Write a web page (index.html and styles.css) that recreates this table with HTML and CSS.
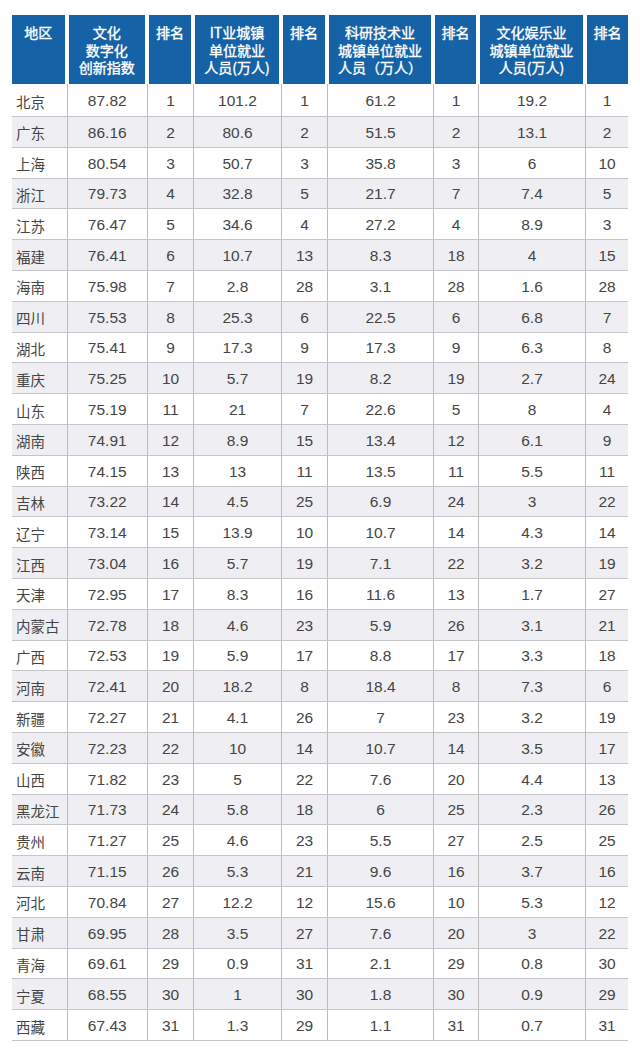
FILE: index.html
```html
<!DOCTYPE html>
<html lang="zh">
<head>
<meta charset="utf-8">
<title>文化数字化创新指数</title>
<link rel="stylesheet" href="styles.css">
</head>
<body>
<div class="table">
  <div class="head">
    <div class="hc">地区</div>
    <div class="hc"><span class="ln">文化</span><span class="ln">数字化</span><span class="ln">创新指数</span></div>
    <div class="hc">排名</div>
    <div class="hc"><span class="ln">IT业城镇</span><span class="ln">单位就业</span><span class="ln">人员(万人)</span></div>
    <div class="hc">排名</div>
    <div class="hc"><span class="ln">科研技术业</span><span class="ln">城镇单位就业</span><span class="ln">人员（万人）</span></div>
    <div class="hc">排名</div>
    <div class="hc"><span class="ln">文化娱乐业</span><span class="ln">城镇单位就业</span><span class="ln">人员(万人)</span></div>
    <div class="hc">排名</div>
  </div>
  <div class="row first"><div class="c name">北京</div><div class="c">87.82</div><div class="c">1</div><div class="c">101.2</div><div class="c">1</div><div class="c">61.2</div><div class="c">1</div><div class="c">19.2</div><div class="c">1</div></div>
  <div class="row alt"><div class="c name">广东</div><div class="c">86.16</div><div class="c">2</div><div class="c">80.6</div><div class="c">2</div><div class="c">51.5</div><div class="c">2</div><div class="c">13.1</div><div class="c">2</div></div>
  <div class="row"><div class="c name">上海</div><div class="c">80.54</div><div class="c">3</div><div class="c">50.7</div><div class="c">3</div><div class="c">35.8</div><div class="c">3</div><div class="c">6</div><div class="c">10</div></div>
  <div class="row alt"><div class="c name">浙江</div><div class="c">79.73</div><div class="c">4</div><div class="c">32.8</div><div class="c">5</div><div class="c">21.7</div><div class="c">7</div><div class="c">7.4</div><div class="c">5</div></div>
  <div class="row"><div class="c name">江苏</div><div class="c">76.47</div><div class="c">5</div><div class="c">34.6</div><div class="c">4</div><div class="c">27.2</div><div class="c">4</div><div class="c">8.9</div><div class="c">3</div></div>
  <div class="row alt"><div class="c name">福建</div><div class="c">76.41</div><div class="c">6</div><div class="c">10.7</div><div class="c">13</div><div class="c">8.3</div><div class="c">18</div><div class="c">4</div><div class="c">15</div></div>
  <div class="row"><div class="c name">海南</div><div class="c">75.98</div><div class="c">7</div><div class="c">2.8</div><div class="c">28</div><div class="c">3.1</div><div class="c">28</div><div class="c">1.6</div><div class="c">28</div></div>
  <div class="row alt"><div class="c name">四川</div><div class="c">75.53</div><div class="c">8</div><div class="c">25.3</div><div class="c">6</div><div class="c">22.5</div><div class="c">6</div><div class="c">6.8</div><div class="c">7</div></div>
  <div class="row"><div class="c name">湖北</div><div class="c">75.41</div><div class="c">9</div><div class="c">17.3</div><div class="c">9</div><div class="c">17.3</div><div class="c">9</div><div class="c">6.3</div><div class="c">8</div></div>
  <div class="row alt"><div class="c name">重庆</div><div class="c">75.25</div><div class="c">10</div><div class="c">5.7</div><div class="c">19</div><div class="c">8.2</div><div class="c">19</div><div class="c">2.7</div><div class="c">24</div></div>
  <div class="row"><div class="c name">山东</div><div class="c">75.19</div><div class="c">11</div><div class="c">21</div><div class="c">7</div><div class="c">22.6</div><div class="c">5</div><div class="c">8</div><div class="c">4</div></div>
  <div class="row alt"><div class="c name">湖南</div><div class="c">74.91</div><div class="c">12</div><div class="c">8.9</div><div class="c">15</div><div class="c">13.4</div><div class="c">12</div><div class="c">6.1</div><div class="c">9</div></div>
  <div class="row"><div class="c name">陕西</div><div class="c">74.15</div><div class="c">13</div><div class="c">13</div><div class="c">11</div><div class="c">13.5</div><div class="c">11</div><div class="c">5.5</div><div class="c">11</div></div>
  <div class="row alt"><div class="c name">吉林</div><div class="c">73.22</div><div class="c">14</div><div class="c">4.5</div><div class="c">25</div><div class="c">6.9</div><div class="c">24</div><div class="c">3</div><div class="c">22</div></div>
  <div class="row"><div class="c name">辽宁</div><div class="c">73.14</div><div class="c">15</div><div class="c">13.9</div><div class="c">10</div><div class="c">10.7</div><div class="c">14</div><div class="c">4.3</div><div class="c">14</div></div>
  <div class="row alt"><div class="c name">江西</div><div class="c">73.04</div><div class="c">16</div><div class="c">5.7</div><div class="c">19</div><div class="c">7.1</div><div class="c">22</div><div class="c">3.2</div><div class="c">19</div></div>
  <div class="row"><div class="c name">天津</div><div class="c">72.95</div><div class="c">17</div><div class="c">8.3</div><div class="c">16</div><div class="c">11.6</div><div class="c">13</div><div class="c">1.7</div><div class="c">27</div></div>
  <div class="row alt"><div class="c name">内蒙古</div><div class="c">72.78</div><div class="c">18</div><div class="c">4.6</div><div class="c">23</div><div class="c">5.9</div><div class="c">26</div><div class="c">3.1</div><div class="c">21</div></div>
  <div class="row"><div class="c name">广西</div><div class="c">72.53</div><div class="c">19</div><div class="c">5.9</div><div class="c">17</div><div class="c">8.8</div><div class="c">17</div><div class="c">3.3</div><div class="c">18</div></div>
  <div class="row alt"><div class="c name">河南</div><div class="c">72.41</div><div class="c">20</div><div class="c">18.2</div><div class="c">8</div><div class="c">18.4</div><div class="c">8</div><div class="c">7.3</div><div class="c">6</div></div>
  <div class="row"><div class="c name">新疆</div><div class="c">72.27</div><div class="c">21</div><div class="c">4.1</div><div class="c">26</div><div class="c">7</div><div class="c">23</div><div class="c">3.2</div><div class="c">19</div></div>
  <div class="row alt"><div class="c name">安徽</div><div class="c">72.23</div><div class="c">22</div><div class="c">10</div><div class="c">14</div><div class="c">10.7</div><div class="c">14</div><div class="c">3.5</div><div class="c">17</div></div>
  <div class="row"><div class="c name">山西</div><div class="c">71.82</div><div class="c">23</div><div class="c">5</div><div class="c">22</div><div class="c">7.6</div><div class="c">20</div><div class="c">4.4</div><div class="c">13</div></div>
  <div class="row alt"><div class="c name">黑龙江</div><div class="c">71.73</div><div class="c">24</div><div class="c">5.8</div><div class="c">18</div><div class="c">6</div><div class="c">25</div><div class="c">2.3</div><div class="c">26</div></div>
  <div class="row"><div class="c name">贵州</div><div class="c">71.27</div><div class="c">25</div><div class="c">4.6</div><div class="c">23</div><div class="c">5.5</div><div class="c">27</div><div class="c">2.5</div><div class="c">25</div></div>
  <div class="row alt"><div class="c name">云南</div><div class="c">71.15</div><div class="c">26</div><div class="c">5.3</div><div class="c">21</div><div class="c">9.6</div><div class="c">16</div><div class="c">3.7</div><div class="c">16</div></div>
  <div class="row"><div class="c name">河北</div><div class="c">70.84</div><div class="c">27</div><div class="c">12.2</div><div class="c">12</div><div class="c">15.6</div><div class="c">10</div><div class="c">5.3</div><div class="c">12</div></div>
  <div class="row alt"><div class="c name">甘肃</div><div class="c">69.95</div><div class="c">28</div><div class="c">3.5</div><div class="c">27</div><div class="c">7.6</div><div class="c">20</div><div class="c">3</div><div class="c">22</div></div>
  <div class="row"><div class="c name">青海</div><div class="c">69.61</div><div class="c">29</div><div class="c">0.9</div><div class="c">31</div><div class="c">2.1</div><div class="c">29</div><div class="c">0.8</div><div class="c">30</div></div>
  <div class="row alt"><div class="c name">宁夏</div><div class="c">68.55</div><div class="c">30</div><div class="c">1</div><div class="c">30</div><div class="c">1.8</div><div class="c">30</div><div class="c">0.9</div><div class="c">29</div></div>
  <div class="row"><div class="c name">西藏</div><div class="c">67.43</div><div class="c">31</div><div class="c">1.3</div><div class="c">29</div><div class="c">1.1</div><div class="c">31</div><div class="c">0.7</div><div class="c">31</div></div>
</div>
</body>
</html>
```
FILE: styles.css
```css
html, body {
  margin: 0;
  padding: 0;
  background: #ffffff;
}
body {
  font-family: "Liberation Sans", "Noto Sans CJK SC", sans-serif;
  color: #454545;
}
.table {
  width: 616px;
  margin: 15px 12px 0 12px;
}
.head, .row {
  display: grid;
  grid-template-columns: 54.5px 80.5px 46px 88px 46px 106px 45px 107px 43px;
}
.head {
  height: 69px;
}
.hc {
  background: #1662a6;
  color: #ffffff;
  font-family: "Noto Sans CJK SC", sans-serif;
  font-weight: 400;
  -webkit-text-stroke: 0.35px #ffffff;
  font-size: 14px;
  line-height: 17.5px;
  text-align: center;
  padding-top: 9px;
  margin: 0 2px;
  white-space: nowrap;
  display: flex;
  flex-direction: column;
  align-items: center;
}
.hc .ln {
  display: block;
  height: 17.5px;
  line-height: 17.5px;
}
.hc:first-child { margin-left: 0; }
.hc:last-child { margin-right: 0; }
.row {
  height: 30.8px;
  box-sizing: border-box;
  border-bottom: 1px solid #c6c6ca;
}
.row.first {
  height: 33px;
}
.row.alt {
  background: #efeff3;
}
.c {
  display: flex;
  align-items: center;
  justify-content: center;
  font-size: 15.5px;
  padding-top: 2px;
  border-left: 1px solid #bcbcbc;
}
.c.name {
  justify-content: flex-start;
  padding-left: 4px;
  border-left: none;
  font-family: "Noto Sans CJK SC", sans-serif;
  font-size: 14.5px;
}
```
